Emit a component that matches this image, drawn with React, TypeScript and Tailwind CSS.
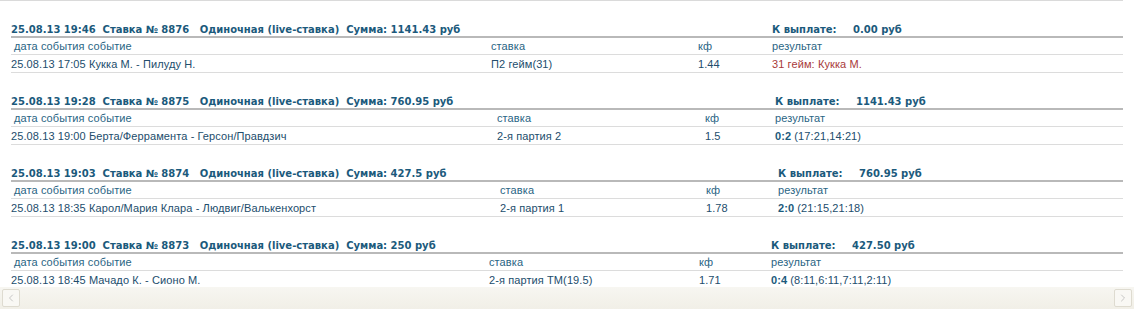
import { ChevronLeft, ChevronRight } from 'lucide-react';

interface Bet {
  placed: string;
  num: string;
  sum: string;
  payout: string;
  eventTime: string;
  event: string;
  stake: string;
  kf: string;
  score?: string;
  detail: string;
  lost?: boolean;
  cols: [string, string, string];
  headW: string;
}

const bets: Bet[] = [
  {
    placed: '25.08.13 19:46',
    num: '8876',
    sum: '1141.43',
    payout: '0.00',
    eventTime: '25.08.13 17:05',
    event: 'Кукка М. - Пилуду Н.',
    stake: 'П2 гейм(31)',
    kf: '1.44',
    detail: '31 гейм: Кукка М.',
    lost: true,
    cols: ['w-[480px]', 'w-[207px]', 'w-[74px]'],
    headW: 'w-[761px]',
  },
  {
    placed: '25.08.13 19:28',
    num: '8875',
    sum: '760.95',
    payout: '1141.43',
    eventTime: '25.08.13 19:00',
    event: 'Берта/Феррамента - Герсон/Правдзич',
    stake: '2-я партия 2',
    kf: '1.5',
    score: '0:2',
    detail: ' (17:21,14:21)',
    cols: ['w-[486px]', 'w-[208px]', 'w-[70px]'],
    headW: 'w-[764px]',
  },
  {
    placed: '25.08.13 19:03',
    num: '8874',
    sum: '427.5',
    payout: '760.95',
    eventTime: '25.08.13 18:35',
    event: 'Карол/Мария Клара - Людвиг/Валькенхорст',
    stake: '2-я партия 1',
    kf: '1.78',
    score: '2:0',
    detail: ' (21:15,21:18)',
    cols: ['w-[489px]', 'w-[206px]', 'w-[72px]'],
    headW: 'w-[767px]',
  },
  {
    placed: '25.08.13 19:00',
    num: '8873',
    sum: '250',
    payout: '427.50',
    eventTime: '25.08.13 18:45',
    event: 'Мачадо К. - Сионо М.',
    stake: '2-я партия ТМ(19.5)',
    kf: '1.71',
    score: '0:4',
    detail: ' (8:11,6:11,7:11,2:11)',
    cols: ['w-[478px]', 'w-[210px]', 'w-[72px]'],
    headW: 'w-[760px]',
  },
];

function BetBlock({ bet }: { bet: Bet }) {
  const [c1, c2, c3] = bet.cols;
  return (
    <div className="mb-[19px] text-[11px] leading-none">
      <div className="flex h-[18px] items-center border-b-2 border-[#b9b9b9] pt-[3px] font-['DejaVu_Sans',sans-serif] text-[10px] font-bold text-[#1b5a7c]">
        <div className={`${bet.headW} whitespace-pre`}>
          {`${bet.placed}  Ставка № ${bet.num}   Одиночная (live-ставка)  Сумма: ${bet.sum} руб`}
        </div>
        <div className="w-[81px]">К выплате:</div>
        <div>{bet.payout} руб</div>
      </div>
      <div className="flex h-[17px] items-center border-b border-[#dcdcdc] tracking-[0.1px] text-[#2a6584]">
        <div className={`${c1} pl-[3px]`}>дата события событие</div>
        <div className={c2}>ставка</div>
        <div className={c3}>кф</div>
        <div>результат</div>
      </div>
      <div className="flex h-[18px] items-center border-b border-[#dcdcdc] pt-px tracking-[0.1px] text-[#224d6c]">
        <div className={`${c1} whitespace-pre`}>{`${bet.eventTime} ${bet.event}`}</div>
        <div className={c2}>{bet.stake}</div>
        <div className={c3}>{bet.kf}</div>
        {bet.lost ? (
          <div className="text-[#a83a3a]">{bet.detail}</div>
        ) : (
          <div className="whitespace-pre">
            <span className="font-bold text-[#1b5a7c]">{bet.score}</span>
            {bet.detail}
          </div>
        )}
      </div>
    </div>
  );
}

export default function App() {
  return (
    <div className="h-[309px] w-[1134px] overflow-hidden bg-white font-['Liberation_Sans',Arial,sans-serif]">
      <div className="h-[287px] overflow-hidden">
        <div className="w-[1123px] border-t border-[#dadada] pt-[19px] pl-[11px]">
          {bets.map((b) => (
            <BetBlock key={b.num} bet={b} />
          ))}
        </div>
      </div>
      <div className="flex h-[22px] items-center justify-between bg-gradient-to-b from-[#f7f6f1] to-[#f1efe7] px-[2px]">
        <div className="flex h-[18px] w-[18px] items-center justify-center rounded-[2px] border border-[#dedbd0] bg-[#f9f8f4] text-[#b4b4b4]">
          <ChevronLeft size={12} strokeWidth={1.5} />
        </div>
        <div className="flex h-[18px] w-[18px] items-center justify-center rounded-[2px] border border-[#dedbd0] bg-[#f9f8f4] text-[#b4b4b4]">
          <ChevronRight size={12} strokeWidth={1.5} />
        </div>
      </div>
    </div>
  );
}
